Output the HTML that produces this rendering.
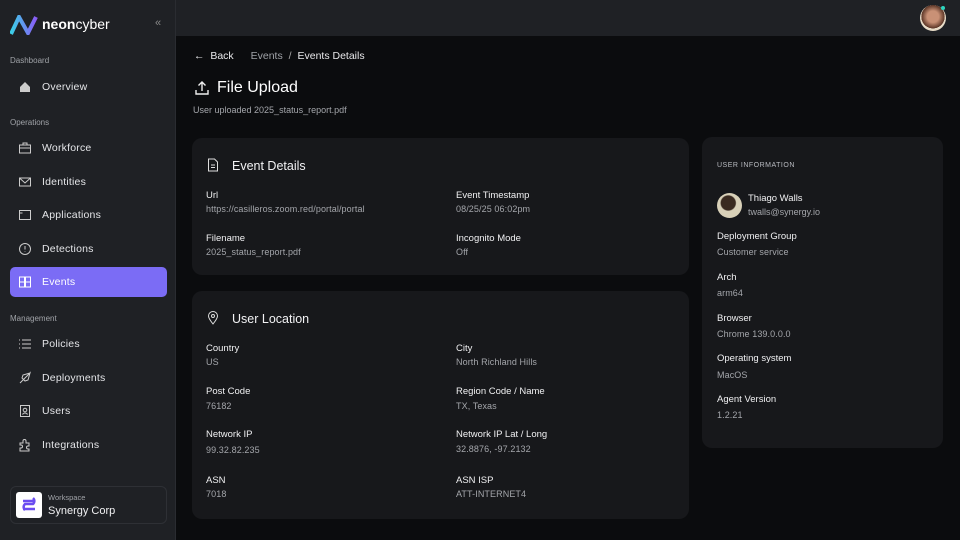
<!DOCTYPE html>
<html><head><meta charset="utf-8"><style>
*{box-sizing:border-box;margin:0;padding:0}
body{width:960px;height:540px;background:#0b0c0e;font-family:"Liberation Sans",sans-serif;color:#e8e8ea;position:relative;overflow:hidden}
.sb{position:absolute;left:0;top:0;width:176px;height:540px;background:#1f2125;border-right:1px solid #2a2c31}
.top{position:absolute;left:176px;top:0;right:0;height:36px;background:#1f2125}
.sec{position:absolute;left:10px;font-size:8px;color:#a0a3a8}
.it{position:absolute;left:10px;width:157px;height:30px;border-radius:5px;display:flex;align-items:center;font-size:10.5px;color:#e4e5e8;letter-spacing:.2px}
.it svg{margin-left:8px;margin-right:10px;width:14px;height:14px}
.it.act{background:#7b6cf5;color:#fff}
.card{position:absolute;background:#17181b;border-radius:10px}
.lbl{position:absolute;font-size:9.5px;color:#f0f0f2}
.val{position:absolute;font-size:9px;color:#a4a6ab;letter-spacing:.1px}
.h{position:absolute;font-size:12.5px;color:#f2f2f4}
</style></head><body>
<div class="sb">
<svg style="position:absolute;left:10px;top:15px" width="28" height="20" viewBox="0 0 28 20"><defs><linearGradient id="g" x1="0" x2="1"><stop offset="0" stop-color="#3ad0e8"/><stop offset="1" stop-color="#8a5cf6"/></linearGradient></defs><path d="M1 19L9 2L18 18L26 2" stroke="url(#g)" stroke-width="4" fill="none"/></svg>
<div style="position:absolute;left:42px;top:16px;font-size:14px;color:#fff"><b>neon</b>cyber</div>
<div style="position:absolute;left:155px;top:17px;font-size:11px;color:#888">«</div>
<div class="sec" style="top:56px">Dashboard</div>
<div class="it" style="top:72px"><svg viewBox="0 0 14 14"><path d="M2 7L7 2L12 7V12H2Z" fill="#ccc"/></svg>Overview</div>
<div class="sec" style="top:118px">Operations</div>
<div class="it" style="top:133px"><svg viewBox="0 0 14 14" fill="none" stroke="#ccc"><rect x="1.5" y="4" width="11" height="8"/><path d="M5 4V2h4v2M1.5 7h11"/></svg>Workforce</div>
<div class="it" style="top:167px"><svg viewBox="0 0 14 14" fill="none" stroke="#ccc"><rect x="1.5" y="3" width="11" height="8"/><path d="M1.5 3L7 8L12.5 3"/></svg>Identities</div>
<div class="it" style="top:200px"><svg viewBox="0 0 14 14" fill="none" stroke="#ccc"><rect x="1.5" y="2.5" width="11" height="9"/><path d="M1.5 5h3"/></svg>Applications</div>
<div class="it" style="top:234px"><svg viewBox="0 0 14 14" fill="none" stroke="#ccc"><circle cx="7" cy="7" r="5.5"/><path d="M7 4v3.5M7 9.5v.5"/></svg>Detections</div>
<div class="it act" style="top:267px"><svg viewBox="0 0 14 14" fill="none" stroke="#fff"><rect x="1.5" y="2" width="5" height="10"/><rect x="7.5" y="2" width="5" height="10"/><path d="M1.5 7h5M7.5 7h5"/></svg>Events</div>
<div class="sec" style="top:314px">Management</div>
<div class="it" style="top:329px"><svg viewBox="0 0 14 14" fill="none" stroke="#ccc"><path d="M1 3h1M1 7h1M1 11h1M4 3h9M4 7h9M4 11h9"/></svg>Policies</div>
<div class="it" style="top:363px"><svg viewBox="0 0 14 14" fill="none" stroke="#ccc"><path d="M3 11L12 2L10 9L7 10L4 7L5 4L12 2M2 12l2-2"/></svg>Deployments</div>
<div class="it" style="top:396px"><svg viewBox="0 0 14 14" fill="none" stroke="#ccc"><rect x="2.5" y="1.5" width="9" height="11"/><circle cx="7" cy="6" r="1.8"/><path d="M4.5 10.5c1-2 4-2 5 0"/></svg>Users</div>
<div class="it" style="top:430px"><svg viewBox="0 0 14 14" fill="none" stroke="#ccc"><path d="M2 5h3V3a1.5 1.5 0 013 0v2h3v3h-1a1.5 1.5 0 000 3h1v2H2v-3h1a1.5 1.5 0 000-3H2z"/></svg>Integrations</div>
<div style="position:absolute;left:10px;top:486px;width:157px;height:38px;border:1px solid #2e3035;border-radius:6px">
<div style="position:absolute;left:5px;top:5px;width:26px;height:26px;background:#fff;border-radius:3px"><svg width="26" height="26" viewBox="0 0 26 26"><path d="M7 9h12M7 17h12M9 18a4 4 0 01 0-6h8a4 4 0 000-6" stroke="#6a4cf0" stroke-width="2.5" fill="none"/></svg></div>
<div style="position:absolute;left:37px;top:6px;font-size:7.5px;color:#a0a3a8">Workspace</div>
<div style="position:absolute;left:37px;top:18px;font-size:11px;color:#f0f0f2">Synergy Corp</div></div>
</div>
<div class="top"><div style="position:absolute;left:744px;top:5px;width:26px;height:26px;border-radius:50%;background:radial-gradient(circle at 50% 45%,#c99176 30%,#5b3526 60%,#e8dcc8 61%)"></div><div style="position:absolute;left:765px;top:6px;width:4px;height:4px;border-radius:50%;background:#2dd4bf"></div></div>
<div style="position:absolute;left:194px;top:50px;font-size:10.5px;color:#e8e8ea">←&nbsp; Back <span style="color:#a0a3a8;margin-left:14px">Events</span> <span style="color:#aaa;margin:0 3px">/</span> Events Details</div>
<svg style="position:absolute;left:194px;top:80px" width="16" height="16" viewBox="0 0 16 16" fill="none" stroke="#eee" stroke-width="1.4"><path d="M8 11V2M4.5 5.5L8 2l3.5 3.5M2 10v4h12v-4"/></svg>
<div style="position:absolute;left:217px;top:79px;font-size:16px;color:#fff">File Upload</div>
<div style="position:absolute;left:193px;top:105px;font-size:9px;color:#a4a6ab">User uploaded 2025_status_report.pdf</div>
<div class="card" style="left:192px;top:138px;width:497px;height:137px">
<svg style="position:absolute;left:15px;top:20px" width="12" height="14" viewBox="0 0 12 14" fill="none" stroke="#ddd"><path d="M1.5 1h6l3 3v9h-9zM4 7h4M4 9.5h4"/></svg>
<div class="h" style="left:40px;top:21px">Event Details</div>
<div class="lbl" style="left:14px;top:52px">Url</div><div class="val" style="left:14px;top:66px">https://casilleros.zoom.red/portal/portal</div>
<div class="lbl" style="left:264px;top:52px">Event Timestamp</div><div class="val" style="left:264px;top:66px">08/25/25 06:02pm</div>
<div class="lbl" style="left:14px;top:95px">Filename</div><div class="val" style="left:14px;top:109px">2025_status_report.pdf</div>
<div class="lbl" style="left:264px;top:95px">Incognito Mode</div><div class="val" style="left:264px;top:109px">Off</div>
</div>
<div class="card" style="left:192px;top:291px;width:497px;height:228px">
<svg style="position:absolute;left:15px;top:20px" width="12" height="14" viewBox="0 0 12 14" fill="none" stroke="#ddd"><path d="M6 13C2 8 1.5 6.5 1.5 5a4.5 4.5 0 019 0c0 1.5-.5 3-4.5 8z"/><circle cx="6" cy="5" r="1.5"/></svg>
<div class="h" style="left:40px;top:21px">User Location</div>
<div class="lbl" style="left:14px;top:52px">Country</div><div class="val" style="left:14px;top:66px">US</div>
<div class="lbl" style="left:264px;top:52px">City</div><div class="val" style="left:264px;top:66px">North Richland Hills</div>
<div class="lbl" style="left:14px;top:95px">Post Code</div><div class="val" style="left:14px;top:110px">76182</div>
<div class="lbl" style="left:264px;top:95px">Region Code / Name</div><div class="val" style="left:264px;top:110px">TX, Texas</div>
<div class="lbl" style="left:14px;top:138px">Network IP</div><div class="val" style="left:14px;top:154px">99.32.82.235</div>
<div class="lbl" style="left:264px;top:138px">Network IP Lat / Long</div><div class="val" style="left:264px;top:153px">32.8876, -97.2132</div>
<div class="lbl" style="left:14px;top:184px">ASN</div><div class="val" style="left:14px;top:198px">7018</div>
<div class="lbl" style="left:264px;top:184px">ASN ISP</div><div class="val" style="left:264px;top:198px">ATT-INTERNET4</div>
</div>
<div class="card" style="left:702px;top:137px;width:241px;height:311px">
<div style="position:absolute;left:15px;top:25px;font-size:7px;letter-spacing:.5px;color:#b8bac0">USER INFORMATION</div>
<div style="position:absolute;left:15px;top:56px;width:25px;height:25px;border-radius:50%;background:radial-gradient(circle at 45% 40%,#3a2a20 35%,#d8d0b8 40%)"></div>
<div style="position:absolute;left:46px;top:56px;font-size:9.5px;color:#f0f0f2">Thiago Walls</div>
<div style="position:absolute;left:46px;top:70px;font-size:9px;color:#a4a6ab">twalls@synergy.io</div>
<div class="lbl" style="left:15px;top:94px">Deployment Group</div><div class="val" style="left:15px;top:110px">Customer service</div>
<div class="lbl" style="left:15px;top:135px">Arch</div><div class="val" style="left:15px;top:151px">arm64</div>
<div class="lbl" style="left:15px;top:176px">Browser</div><div class="val" style="left:15px;top:192px">Chrome 139.0.0.0</div>
<div class="lbl" style="left:15px;top:216px">Operating system</div><div class="val" style="left:15px;top:233px">MacOS</div>
<div class="lbl" style="left:15px;top:257px">Agent Version</div><div class="val" style="left:15px;top:273px">1.2.21</div>
</div>
</body></html>
